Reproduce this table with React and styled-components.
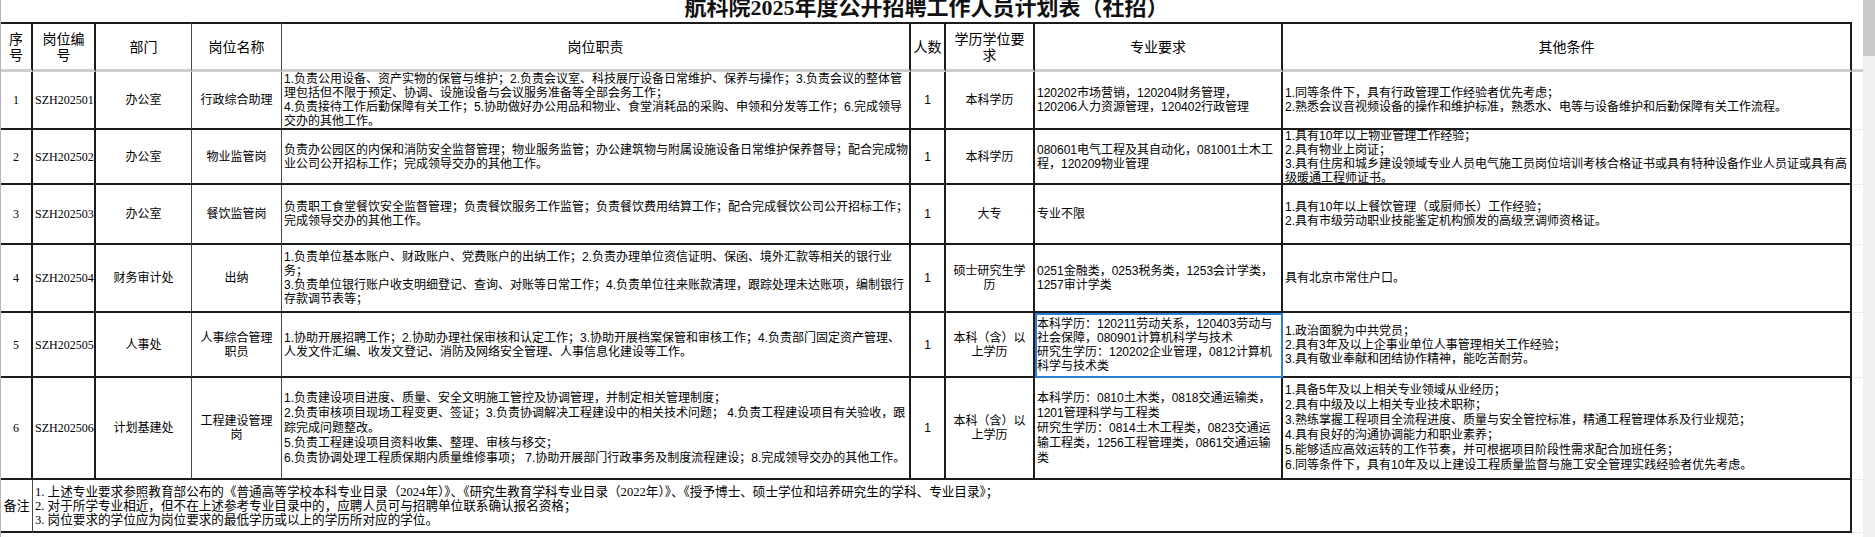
import styled, { createGlobalStyle } from 'styled-components';

const GlobalStyle = createGlobalStyle`
  html, body {
    margin: 0;
    padding: 0;
    background: #fff;
  }
  body {
    font-family: "Liberation Sans", "Noto Sans CJK SC", sans-serif;
    color: #000;
  }
`;

// 列宽 / 行高 (px)
const COLS = [32, 63, 96, 90, 629, 35, 89, 248, 569, 11];
const ROWS = [50, 58, 55, 60, 68, 65, 102, 53];

const headers = [
  { lines: ['序', '号'] },
  { lines: ['岗位编', '号'] },
  { lines: ['部门'], thin: true },
  { lines: ['岗位名称'], thin: true },
  { lines: ['岗位职责'] },
  { lines: ['人数'] },
  { lines: ['学历学位要', '求'] },
  { lines: ['专业要求'] },
  { lines: ['其他条件'] },
];

const jobs = [
  {
    no: '1',
    code: 'SZH202501',
    dept: '办公室',
    name: ['行政综合助理'],
    duties: [
      '1.负责公用设备、资产实物的保管与维护；2.负责会议室、科技展厅设备日常维护、保养与操作；3.负责会议的整体管',
      '理包括但不限于预定、协调、设施设备与会议服务准备等全部会务工作；',
      '4.负责接待工作后勤保障有关工作；5.协助做好办公用品和物业、食堂消耗品的采购、申领和分发等工作；6.完成领导',
      '交办的其他工作。',
    ],
    count: '1',
    edu: ['本科学历'],
    major: ['120202市场营销，120204财务管理，', '120206人力资源管理，120402行政管理'],
    other: [
      '1.同等条件下，具有行政管理工作经验者优先考虑；',
      '2.熟悉会议音视频设备的操作和维护标准，熟悉水、电等与设备维护和后勤保障有关工作流程。',
    ],
  },
  {
    no: '2',
    code: 'SZH202502',
    dept: '办公室',
    name: ['物业监管岗'],
    duties: [
      '负责办公园区的内保和消防安全监督管理；物业服务监管；办公建筑物与附属设施设备日常维护保养督导；配合完成物',
      '业公司公开招标工作；完成领导交办的其他工作。',
    ],
    count: '1',
    edu: ['本科学历'],
    major: ['080601电气工程及其自动化，081001土木工', '程，120209物业管理'],
    other: [
      '1.具有10年以上物业管理工作经验；',
      '2.具有物业上岗证；',
      '3.具有住房和城乡建设领域专业人员电气施工员岗位培训考核合格证书或具有特种设备作业人员证或具有高',
      '级暖通工程师证书。',
    ],
  },
  {
    no: '3',
    code: 'SZH202503',
    dept: '办公室',
    name: ['餐饮监管岗'],
    duties: [
      '负责职工食堂餐饮安全监督管理；负责餐饮服务工作监管；负责餐饮费用结算工作；配合完成餐饮公司公开招标工作；',
      '完成领导交办的其他工作。',
    ],
    count: '1',
    edu: ['大专'],
    major: ['专业不限'],
    other: [
      '1.具有10年以上餐饮管理（或厨师长）工作经验；',
      '2.具有市级劳动职业技能鉴定机构颁发的高级烹调师资格证。',
    ],
  },
  {
    no: '4',
    code: 'SZH202504',
    dept: '财务审计处',
    name: ['出纳'],
    duties: [
      '1.负责单位基本账户、财政账户、党费账户的出纳工作；2.负责办理单位资信证明、保函、境外汇款等相关的银行业',
      '务；',
      '3.负责单位银行账户收支明细登记、查询、对账等日常工作；4.负责单位往来账款清理，跟踪处理未达账项，编制银行',
      '存款调节表等；',
    ],
    count: '1',
    edu: ['硕士研究生学', '历'],
    major: ['0251金融类，0253税务类，1253会计学类，', '1257审计学类'],
    other: ['具有北京市常住户口。'],
  },
  {
    no: '5',
    code: 'SZH202505',
    dept: '人事处',
    name: ['人事综合管理', '职员'],
    duties: [
      '1.协助开展招聘工作；2.协助办理社保审核和认定工作；3.协助开展档案保管和审核工作；4.负责部门固定资产管理、',
      '人发文件汇编、收发文登记、消防及网络安全管理、人事信息化建设等工作。',
    ],
    count: '1',
    edu: ['本科（含）以', '上学历'],
    major: [
      '本科学历：120211劳动关系，120403劳动与',
      '社会保障，080901计算机科学与技术',
      '研究生学历：120202企业管理，0812计算机',
      '科学与技术类',
    ],
    selected: true,
    other: [
      '1.政治面貌为中共党员；',
      '2.具有3年及以上企事业单位人事管理相关工作经验；',
      '3.具有敬业奉献和团结协作精神，能吃苦耐劳。',
    ],
  },
  {
    no: '6',
    code: 'SZH202506',
    dept: '计划基建处',
    name: ['工程建设管理', '岗'],
    lh: 15,
    duties: [
      '1.负责建设项目进度、质量、安全文明施工管控及协调管理，并制定相关管理制度；',
      '2.负责审核项目现场工程变更、签证；3.负责协调解决工程建设中的相关技术问题； 4.负责工程建设项目有关验收，跟',
      '踪完成问题整改。',
      '5.负责工程建设项目资料收集、整理、审核与移交；',
      '6.负责协调处理工程质保期内质量维修事项； 7.协助开展部门行政事务及制度流程建设；8.完成领导交办的其他工作。',
    ],
    count: '1',
    edu: ['本科（含）以', '上学历'],
    major: [
      '本科学历：0810土木类，0818交通运输类，',
      '1201管理科学与工程类',
      '研究生学历：0814土木工程类，0823交通运',
      '输工程类，1256工程管理类，0861交通运输',
      '类',
    ],
    other: [
      '1.具备5年及以上相关专业领域从业经历；',
      '2.具有中级及以上相关专业技术职称；',
      '3.熟练掌握工程项目全流程进度、质量与安全管控标准，精通工程管理体系及行业规范；',
      '4.具有良好的沟通协调能力和职业素养；',
      '5.能够适应高效运转的工作节奏，并可根据项目阶段性需求配合加班任务；',
      '6.同等条件下，具有10年及以上建设工程质量监督与施工安全管理实践经验者优先考虑。',
    ],
  },
];

const notes = [
  '1. 上述专业要求参照教育部公布的《普通高等学校本科专业目录（2024年）》、《研究生教育学科专业目录（2022年）》、《授予博士、硕士学位和培养研究生的学科、专业目录》；',
  '2. 对于所学专业相近，但不在上述参考专业目录中的，应聘人员可与招聘单位联系确认报名资格；',
  '3. 岗位要求的学位应为岗位要求的最低学历或以上的学历所对应的学位。',
];

function Lines({ items }) {
  return items.map((t, i) => <Line key={i}>{t}</Line>);
}

function App() {
  return (
    <Page>
      <GlobalStyle />
      <Sheet>
        <TitleBar>
          <Title>航科院2025年度公开招聘工作人员计划表（社招）</Title>
        </TitleBar>
        <Grid>
          {headers.map((h, i) => (
            <HeadCell key={i} $thin={h.thin}>
              <Lines items={h.lines} />
            </HeadCell>
          ))}
          <GutterCell $head />

          {jobs.map((job) => [
            <Cell key="no" $serif>{job.no}</Cell>,
            <Cell key="code" $serif $align="left">{job.code}</Cell>,
            <Cell key="dept" $thin>{job.dept}</Cell>,
            <Cell key="name" $thin><Lines items={job.name} /></Cell>,
            <Cell key="duties" $align="left" $lh={job.lh}><Lines items={job.duties} /></Cell>,
            <Cell key="count">{job.count}</Cell>,
            <Cell key="edu"><Lines items={job.edu} /></Cell>,
            <Cell key="major" $align="left" $lh={job.lh} $selected={job.selected}>
              <Lines items={job.major} />
            </Cell>,
            <Cell key="other" $align="left" $lh={job.lh}><Lines items={job.other} /></Cell>,
            <GutterCell key="gut" />,
          ])}

          <Cell $thin>
            <NoteLabel>备注</NoteLabel>
          </Cell>
          <NoteBody>
            <Lines items={notes} />
          </NoteBody>
          <GutterCell />
        </Grid>
      </Sheet>
      <ScrollTrack>
        <ScrollThumb />
      </ScrollTrack>
    </Page>
  );
}

export default App;

const Page = styled.div`
  display: flex;
  width: 1875px;
  height: 537px;
  overflow: hidden;
  background: #fff;
`;

const Sheet = styled.div`
  box-sizing: border-box;
  width: 1863px;
  flex: none;
  border-left: 1px solid #b5b5b5;
  display: flex;
  flex-direction: column;
`;

const TitleBar = styled.div`
  box-sizing: border-box;
  width: 1851px;
  height: 22px;
  padding-bottom: 3px;
  display: flex;
  justify-content: center;
  align-items: flex-end;
  overflow: hidden;
`;

const Title = styled.div`
  font-family: "Liberation Serif", "Noto Sans CJK SC", serif;
  font-size: 22px;
  font-weight: 700;
  line-height: 22px;
  white-space: nowrap;
  color: #111;
`;

const Grid = styled.div`
  display: grid;
  grid-template-columns: ${COLS.map((c) => c + 'px').join(' ')};
  grid-template-rows: ${ROWS.map((r) => r + 'px').join(' ')};
`;

const Cell = styled.div`
  box-sizing: border-box;
  display: flex;
  flex-direction: column;
  justify-content: center;
  align-items: ${(p) => (p.$align === 'left' ? 'flex-start' : 'center')};
  text-align: ${(p) => (p.$align === 'left' ? 'left' : 'center')};
  padding: ${(p) => (p.$align === 'left' ? '0 0 0 2px' : '0 2px')};
  border-right: ${(p) => (p.$thin ? '1px solid #4a4a4a' : '2px solid #1c1c1c')};
  border-bottom: 2px solid #1c1c1c;
  font-family: ${(p) =>
    p.$serif
      ? '"Liberation Serif", "Noto Sans CJK SC", serif'
      : '"Liberation Sans", "Noto Sans CJK SC", sans-serif'};
  font-size: 12px;
  line-height: ${(p) => p.$lh || 14}px;
  white-space: nowrap;
  overflow: hidden;
  outline: ${(p) => (p.$selected ? '2px solid #2b7fd6' : 'none')};
  outline-offset: -2px;
`;

const HeadCell = styled(Cell)`
  font-size: 14px;
  line-height: 16px;
  border-top: 2px solid #1c1c1c;
  border-bottom: 3px solid #cdcdcd;
`;

const GutterCell = styled.div`
  box-sizing: border-box;
  border-bottom: ${(p) => (p.$head ? '3px solid #cdcdcd' : '1px solid #ececec')};
`;

const Line = styled.span`
  display: block;
`;

const NoteLabel = styled.span`
  font-size: 13px;
`;

const NoteBody = styled.div`
  grid-column: 2 / 10;
  box-sizing: border-box;
  display: flex;
  flex-direction: column;
  justify-content: center;
  padding-left: 2px;
  border-right: 2px solid #1c1c1c;
  border-bottom: 2px solid #1c1c1c;
  font-family: "Liberation Serif", "Noto Sans CJK SC", serif;
  font-size: 12.6px;
  line-height: 14px;
  white-space: nowrap;
`;

const ScrollTrack = styled.div`
  width: 12px;
  height: 537px;
  flex: none;
  background: #f0f0f0;
`;

const ScrollThumb = styled.div`
  height: 56px;
  background: #cbcbcb;
`;
